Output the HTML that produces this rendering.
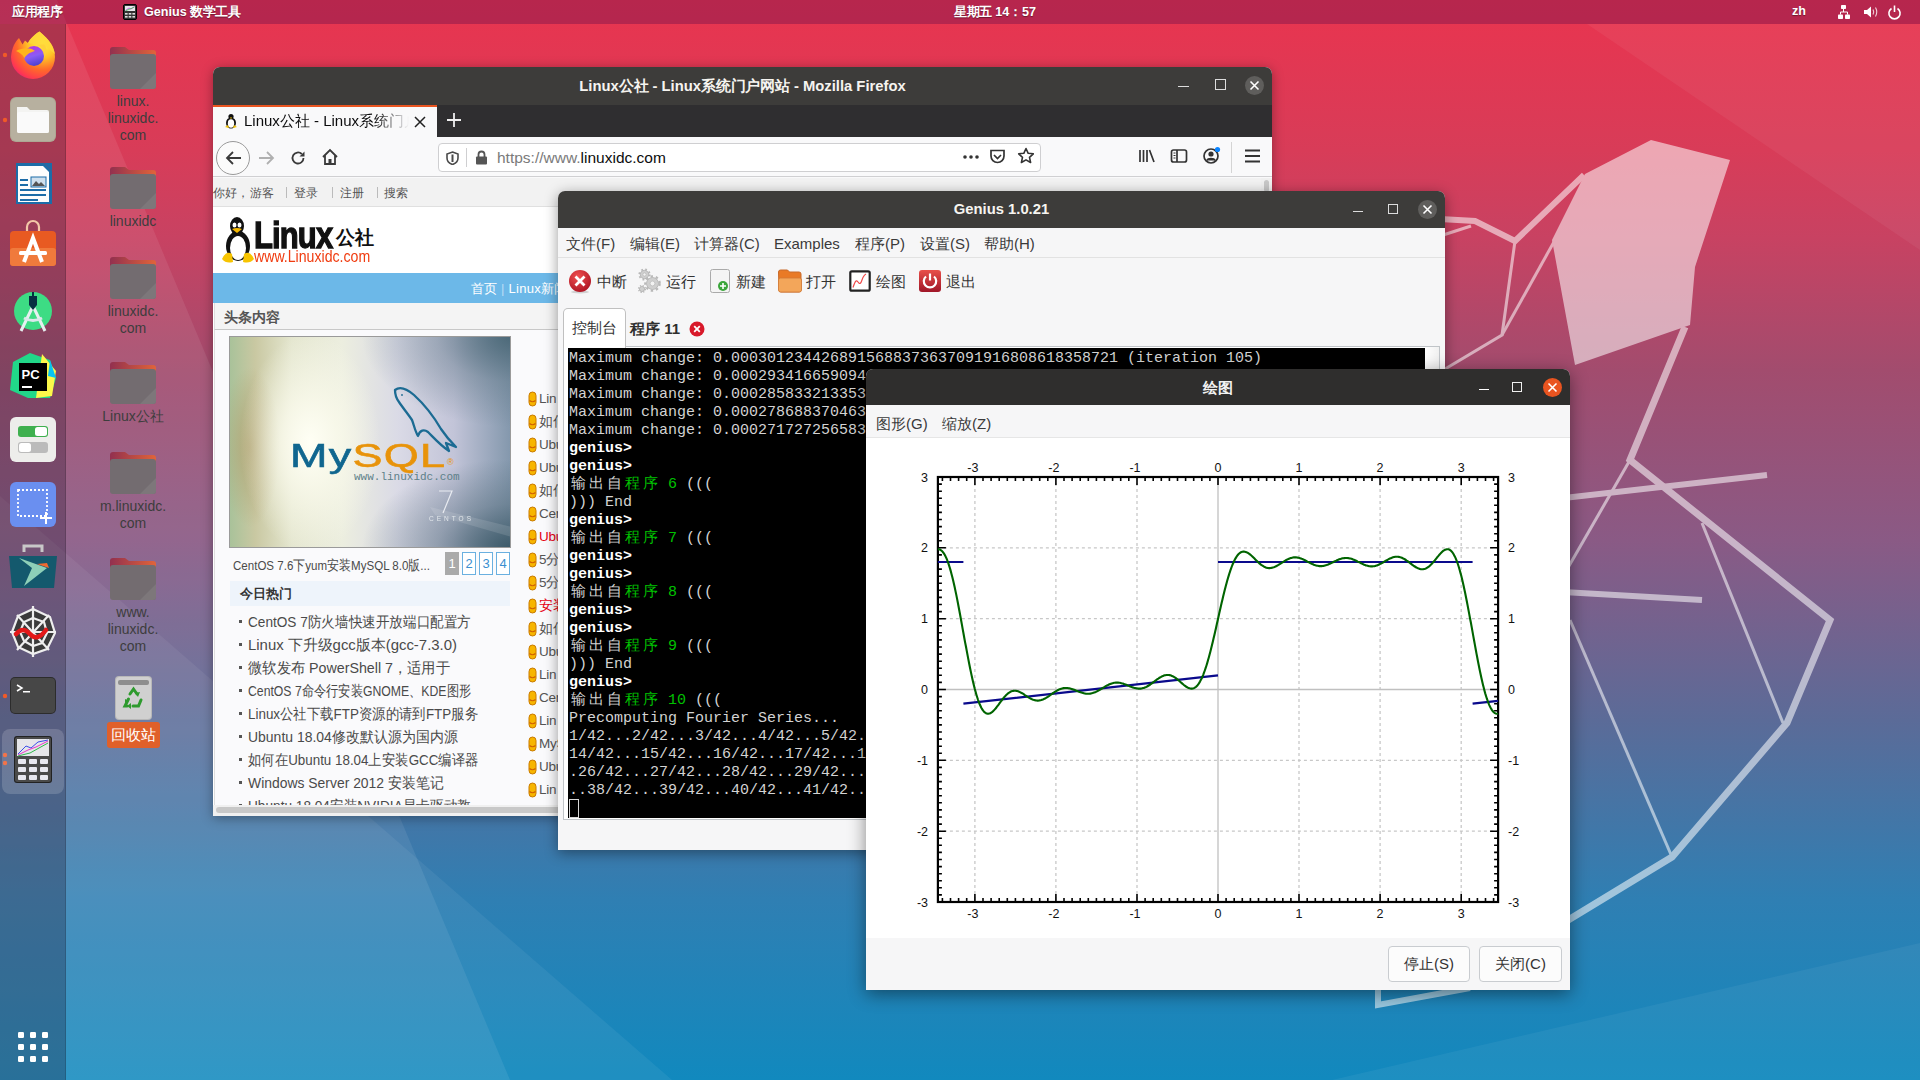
<!DOCTYPE html>
<html><head><meta charset="utf-8">
<style>
*{margin:0;padding:0;box-sizing:border-box}
html,body{width:1920px;height:1080px;overflow:hidden;font-family:"Liberation Sans",sans-serif}
body{position:relative;background:#8a5a85}
.a{position:absolute}
#wall{position:absolute;left:0;top:0}
#topbar{position:absolute;left:0;top:0;width:1920px;height:24px;background:rgba(95,15,75,0.36);color:#fff;font-size:12.6px;font-weight:bold}
#topbar span{position:absolute;top:4px;white-space:nowrap;text-shadow:0 1px 1px rgba(0,0,0,.4)}
#dock{position:absolute;left:0;top:24px;width:66px;height:1056px;background:rgba(25,12,35,0.28);border-right:1px solid rgba(0,0,0,.15)}
.dicon{position:absolute;left:9px;width:48px;height:48px}
.folder{position:absolute;left:109px;width:48px;height:42px}
.li{position:absolute;font-size:13.5px;color:#555;white-space:nowrap;line-height:18px;letter-spacing:-0.2px}
.pg{position:absolute;width:14px;height:23px;border:1px solid #6ab0e0;color:#3a8fd0;font-size:13px;text-align:center;line-height:21px;background:#fff}
.mi{position:absolute;top:44px;font-size:15px;color:#3a3a3a;white-space:nowrap}
.tb{position:absolute;top:82px;font-size:15px;color:#333;white-space:nowrap}
.cl{position:absolute;left:1px;height:18px;line-height:18px;font-family:"Liberation Mono",monospace;font-size:15px;color:#d3d3d3;white-space:pre}
.cj{display:inline-block;width:18px;text-align:center;font-size:15px}
.c{display:inline-block;width:1em;text-align:center;font-style:normal}
.dlabel{position:absolute;width:120px;left:73px;text-align:center;color:#3d3d3d;font-size:14px;line-height:17px}
</style></head><body>
<svg id="wall" width="1920" height="1080" viewBox="0 0 1920 1080">
<defs>
<linearGradient id="wg" x1="0" y1="0" x2="0" y2="1">
<stop offset="0" stop-color="#e9344f"/>
<stop offset="0.139" stop-color="#d83c58"/>
<stop offset="0.22" stop-color="#c84262"/>
<stop offset="0.343" stop-color="#a24c6e"/>
<stop offset="0.5" stop-color="#8a5a85"/>
<stop offset="0.667" stop-color="#5b6b98"/>
<stop offset="0.833" stop-color="#2f7fb3"/>
<stop offset="1" stop-color="#1189be"/>
</linearGradient>
</defs>
<rect width="1920" height="1080" fill="url(#wg)"/>
<polygon points="0,0 57,0 510,1080 0,1080" fill="#fff" opacity="0.08"/>
<polygon points="1587,24 1920,24 1920,250" fill="#fff" opacity="0.05"/>
<polygon points="1920,943 1920,1080 1332,1080" fill="#fff" opacity="0.05"/>
<polygon points="0,496 672,1080 0,1080" fill="#fff" opacity="0.06"/>
<g fill="none" stroke="#fff" stroke-linejoin="miter" opacity="0.55">
<polygon points="1651,140 1730,160 1695,267 1690,325 1575,365 1552,240 1585,174" fill="#fff" stroke="none" opacity="1.0"/>
<polyline points="1440,219 1475,221 1515,241 1584,175" stroke-width="6"/>
<polyline points="1440,236 1471,226" stroke-width="3"/>
<polyline points="1515,241 1502,335 1440,372" stroke-width="3"/>
<polyline points="1502,335 1555,240" stroke-width="3"/>
<polyline points="1685,327 1630,460 1830,620 1787,723 1672,857 1560,925" stroke-width="7"/>
<polyline points="1378,986 1378,1005 1470,988" stroke-width="6"/>
<polyline points="1440,512 1767,475" stroke-width="6"/>
<polyline points="1440,585 1702,600" stroke-width="6"/>
<polyline points="1630,460 1440,790" stroke-width="3"/>
<polyline points="1702,523 1783,723" stroke-width="3"/>
<polyline points="1570,620 1672,857" stroke-width="3"/>
</g>
</svg>

<div id="topbar">
<span style="left:12px"><i class="c">应</i><i class="c">用</i><i class="c">程</i><i class="c">序</i></span>
<svg class="a" style="left:123px;top:4px" width="14" height="16" viewBox="0 0 14 16"><rect x=".5" y=".5" width="13" height="15" rx="1.5" fill="#333" stroke="#000"/><rect x="2" y="2" width="10" height="5" fill="#e8e8ec"/><path d="M2.5 6.5L6 4L8 5L11.5 2.5" stroke="#c040e0" stroke-width=".8" fill="none"/><path d="M2.5 6.8L7 5L11.5 3" stroke="#30c040" stroke-width=".7" fill="none"/><g fill="#ddd"><rect x="2" y="9" width="2.6" height="1.6"/><rect x="5.7" y="9" width="2.6" height="1.6"/><rect x="9.4" y="9" width="2.6" height="1.6"/><rect x="2" y="12" width="2.6" height="1.6"/><rect x="5.7" y="12" width="2.6" height="1.6"/><rect x="9.4" y="12" width="2.6" height="1.6"/></g></svg>
<span style="left:144px">Genius <i class="c">数</i><i class="c">学</i><i class="c">工</i><i class="c">具</i></span>
<span style="left:954px"><i class="c">星</i><i class="c">期</i><i class="c">五</i> 14<i class="c">：</i>57</span>
<span style="left:1792px">zh</span>
<svg class="a" style="left:1836px;top:4px" width="70" height="16" viewBox="0 0 70 16">
<g fill="#fff"><rect x="5" y="1" width="5" height="4" rx=".8"/><rect x="2" y="10.5" width="5" height="4.5" rx=".8"/><rect x="9" y="10.5" width="5" height="4.5" rx=".8"/></g>
<path d="M7.5 5V8M4.5 10.5V8H11.5V10.5" fill="none" stroke="#fff" stroke-width="1"/>
<path d="M28 6H31L35 2.5V13.5L31 10H28z" fill="#fff"/><path d="M37 5.5Q38.5 8 37 10.5M39.5 3.5Q42 8 39.5 12.5" fill="none" stroke="#fff" stroke-width="1.1" opacity=".8"/>
<path d="M55.5 4.5A5.6 5.6 0 1 0 61.5 4.5" fill="none" stroke="#fff" stroke-width="1.6"/><path d="M58.5 1.5V8" stroke="#fff" stroke-width="1.6"/>
</svg>
</div>

<div id="dock"></div>

<svg class="a" style="left:0;top:0" width="66" height="1080" viewBox="0 0 66 1080">
 <defs>
  <radialGradient id="ffg" cx="0.5" cy="0.55" r="0.6"><stop offset="0" stop-color="#ffde3a"/><stop offset="0.5" stop-color="#ff9a1a"/><stop offset="1" stop-color="#e8286a"/></radialGradient>
  <linearGradient id="ffp" x1="0" y1="0" x2="1" y2="1"><stop offset="0" stop-color="#b833e1"/><stop offset="1" stop-color="#5a3fd0"/></linearGradient>
  <linearGradient id="tabg" x1="0" y1="0" x2="1" y2="0"><stop offset="0" stop-color="#9b2f55"/><stop offset="1" stop-color="#e8683a"/></linearGradient>
 </defs>
 <!-- running dots -->
 <circle cx="5" cy="55" r="2.2" fill="#f05a28"/>
 <circle cx="5" cy="120" r="2.2" fill="#f05a28"/>
 <circle cx="5" cy="696" r="2.2" fill="#f05a28"/>
 <circle cx="5" cy="755" r="2.2" fill="#f05a28"/>
 <circle cx="5" cy="763" r="2.2" fill="#f05a28"/>
 <!-- firefox -->
 <defs>
  <radialGradient id="ffr" cx="0.72" cy="0.22" r="0.95"><stop offset="0" stop-color="#fff44f"/><stop offset="0.35" stop-color="#ffc326"/><stop offset="0.62" stop-color="#ff6a2a"/><stop offset="0.85" stop-color="#ff3850"/><stop offset="1" stop-color="#e31587"/></radialGradient>
  <linearGradient id="ffq" x1="0.3" y1="0" x2="0.6" y2="1"><stop offset="0" stop-color="#b833e1"/><stop offset="0.5" stop-color="#8a5cf5"/><stop offset="1" stop-color="#4a3fd0"/></linearGradient>
 </defs>
 <path d="M11 57A22 22 0 0 0 55 57C55 47 50 40 39.5 31.5C35 34 30 39 28 43L25 40.5L22.5 44.5L19 38C15 42 12 47 11 57Z" fill="url(#ffr)"/>
 <path d="M28 43C30 39 35 34 39.5 31.5C48 39 53 45 55 54L46 47Z" fill="#ffd83a" opacity=".85"/>
 <circle cx="34" cy="56" r="10" fill="url(#ffq)"/>
 <path d="M16 51C22 48 30 47 35 51C30 52.5 27 54 24.5 58C22 54 19 52 16 51Z" fill="#ffb51e"/>
 <path d="M37 45C42 47 45 52 44 58C47 54 47.5 48 44 44.5Z" fill="#ffcf3a" opacity=".9"/>
 <!-- files -->
 <rect x="10" y="97" width="46" height="45" rx="6" fill="#aea693"/>
 <rect x="11" y="98" width="44" height="43" rx="5" fill="#b7b09f"/>
 <path d="M17 107h10l3 3h17a2 2 0 0 1 2 2v19a2 2 0 0 1-2 2H19a2 2 0 0 1-2-2z" fill="#f4f4f2"/>
 <rect x="17" y="112" width="32" height="21" rx="2" fill="#fafafa"/>
 <!-- writer -->
 <path d="M16 163H44L52 171V204H16z" fill="#1c6ca8"/>
 <path d="M18 166H43L49 172V202H18z" fill="#fdfdfd"/>
 <path d="M44 163L52 163L52 171z" fill="#1c6ca8"/>
 <rect x="20" y="179" width="8" height="2" fill="#1c6ca8"/><rect x="20" y="184" width="8" height="2" fill="#1c6ca8"/>
 <rect x="20" y="189" width="26" height="2" fill="#1c6ca8"/><rect x="20" y="194" width="26" height="2" fill="#1c6ca8"/><rect x="20" y="199" width="18" height="2" fill="#1c6ca8"/>
 <rect x="31" y="177" width="15" height="10" fill="#cfe0ee" stroke="#1c6ca8" stroke-width="1"/>
 <path d="M32 186L36 181L39 184L41 182L45 186z" fill="#555"/>
 <!-- software -->
 <path d="M27 232V227a6 6 0 0 1 12 0V232" fill="none" stroke="#f3c8a8" stroke-width="2.2"/>
 <rect x="10" y="231" width="46" height="35" rx="4" fill="#e85a22"/>
 <rect x="10" y="248" width="46" height="18" rx="3" fill="#f07a3c"/>
 <path d="M24 262L33 238L42 262" fill="none" stroke="#fff" stroke-width="4"/>
 <rect x="19" y="251" width="28" height="4" rx="1.5" fill="#fff"/>
 <!-- android studio -->
 <circle cx="33" cy="311" r="19" fill="#3ddc84"/>
 <path d="M21 331L33 306L45 331" fill="none" stroke="#e6f0f0" stroke-width="3"/>
 <path d="M24 318Q33 323 42 318" fill="none" stroke="#dce8ec" stroke-width="3"/>
 <path d="M29 296H37V305L33 310L29 305z" fill="#073042"/>
 <rect x="32" y="292" width="2" height="4" fill="#073042"/>
 <!-- pycharm -->
 <path d="M13 362L30 353L50 360L56 378L50 398L28 398L10 390z" fill="#21d789"/>
 <path d="M42 354L56 371L52 396L36 398z" fill="#fcf84a"/>
 <path d="M50 360L56 378L48 376z" fill="#07c3f2"/>
 <rect x="19" y="363" width="28" height="28" fill="#000"/>
 <text x="21.5" y="379" font-family="Liberation Sans" font-weight="bold" font-size="13" fill="#fff">PC</text>
 <rect x="22" y="386" width="10" height="2" fill="#fff"/>
 <!-- toggles -->
 <rect x="10" y="417" width="46" height="45" rx="6" fill="#ededeb"/>
 <rect x="18" y="426" width="30" height="11" rx="3" fill="#3fb04f"/>
 <rect x="35" y="427" width="12" height="9" rx="2.5" fill="#fff"/>
 <rect x="18" y="442" width="30" height="11" rx="3" fill="#bbbbbb"/>
 <rect x="19" y="443" width="12" height="9" rx="2.5" fill="#fff"/>
 <!-- screenshot -->
 <rect x="10" y="482" width="46" height="45" rx="6" fill="#6a8ff0"/>
 <rect x="18" y="490" width="29" height="26" fill="none" stroke="#fff" stroke-width="1.8" stroke-dasharray="2 2"/>
 <path d="M46 512V524M40 518H52" stroke="#fff" stroke-width="2"/>
 <!-- teal bag -->
 <path d="M24 552V546h18v6" fill="none" stroke="#c8c8c8" stroke-width="3"/>
 <path d="M9 556H57L54 588H12z" fill="#14596d"/>
 <path d="M19 558L47 568L24 586L32 568z" fill="#8ed0b8"/>
 <path d="M37 564L47 563L49 568z" fill="#f06a30"/>
 <!-- spider web -->
 <g stroke="#eee" stroke-width="2.2" fill="none">
 <polygon points="33,609 50,617 55,633 47,649 33,654 18,647 12,632 18,616" fill="#3a3a3a"/>
 <polygon points="33,618 44,622 47,633 42,643 33,646 24,641 20,632 24,622"/>
 <path d="M33,606V657M10,632H56M17,615L49,650M49,615L17,650"/>
 </g>
 <path d="M16 634Q23 626 30 634T46 630" fill="none" stroke="#e31818" stroke-width="4.5" stroke-linecap="round"/>
 <!-- terminal -->
 <rect x="10" y="677" width="46" height="37" rx="5" fill="#2c2c2c"/>
 <rect x="11" y="678" width="44" height="35" rx="4" fill="#474747"/>
 <path d="M17 685L22 688L17 691" fill="none" stroke="#fff" stroke-width="1.5"/>
 <rect x="23" y="691" width="7" height="1.5" fill="#fff"/>
 <!-- highlighted genius -->
 <rect x="2" y="729" width="62" height="65" rx="8" fill="#fff" opacity="0.16"/>
 <rect x="14" y="736" width="38" height="47" rx="3" fill="#222"/>
 <rect x="15" y="737" width="36" height="45" rx="2.5" fill="#4a4a4a"/>
 <rect x="17" y="739" width="32" height="17" fill="#e6e6ea"/>
 <path d="M18 754L26 746L31 748L38 742L48 740" fill="none" stroke="#3a4ee8" stroke-width="1"/>
 <path d="M18 755L28 750L36 747L48 741" fill="none" stroke="#e838c8" stroke-width="1"/>
 <path d="M18 756L30 753L48 743" fill="none" stroke="#2fb84a" stroke-width="1"/>
 <g fill="#e8e8f0">
  <rect x="18" y="759" width="8" height="5" rx="1"/><rect x="29" y="759" width="8" height="5" rx="1"/><rect x="40" y="759" width="8" height="5" rx="1"/>
  <rect x="18" y="767" width="8" height="5" rx="1"/><rect x="29" y="767" width="8" height="5" rx="1"/><rect x="40" y="767" width="8" height="5" rx="1"/>
  <rect x="18" y="775" width="8" height="5" rx="1"/><rect x="29" y="775" width="8" height="5" rx="1"/><rect x="40" y="775" width="8" height="5" rx="1"/>
 </g>
 <!-- grid -->
 <g fill="#fff">
  <rect x="18" y="1032" width="6" height="6" rx="1.2"/><rect x="30" y="1032" width="6" height="6" rx="1.2"/><rect x="42" y="1032" width="6" height="6" rx="1.2"/>
  <rect x="18" y="1044" width="6" height="6" rx="1.2"/><rect x="30" y="1044" width="6" height="6" rx="1.2"/><rect x="42" y="1044" width="6" height="6" rx="1.2"/>
  <rect x="18" y="1056" width="6" height="6" rx="1.2"/><rect x="30" y="1056" width="6" height="6" rx="1.2"/><rect x="42" y="1056" width="6" height="6" rx="1.2"/>
 </g>
</svg>
<svg class="a" style="left:100px;top:0" width="66" height="760" viewBox="100 0 66 760"><path d="M110 50a3 3 0 0 1 3-3h12l4 3h24a3 3 0 0 1 3 3v10H110z" fill="url(#tabg2)"/><rect x="110" y="54" width="46" height="35" rx="3" fill="#736c70"/><path d="M156 73L140 89H153a3 3 0 0 0 3-3z" fill="#7d777a"/><path d="M110 170a3 3 0 0 1 3-3h12l4 3h24a3 3 0 0 1 3 3v10H110z" fill="url(#tabg2)"/><rect x="110" y="174" width="46" height="35" rx="3" fill="#736c70"/><path d="M156 193L140 209H153a3 3 0 0 0 3-3z" fill="#7d777a"/><path d="M110 260a3 3 0 0 1 3-3h12l4 3h24a3 3 0 0 1 3 3v10H110z" fill="url(#tabg2)"/><rect x="110" y="264" width="46" height="35" rx="3" fill="#736c70"/><path d="M156 283L140 299H153a3 3 0 0 0 3-3z" fill="#7d777a"/><path d="M110 365a3 3 0 0 1 3-3h12l4 3h24a3 3 0 0 1 3 3v10H110z" fill="url(#tabg2)"/><rect x="110" y="369" width="46" height="35" rx="3" fill="#736c70"/><path d="M156 388L140 404H153a3 3 0 0 0 3-3z" fill="#7d777a"/><path d="M110 455a3 3 0 0 1 3-3h12l4 3h24a3 3 0 0 1 3 3v10H110z" fill="url(#tabg2)"/><rect x="110" y="459" width="46" height="35" rx="3" fill="#736c70"/><path d="M156 478L140 494H153a3 3 0 0 0 3-3z" fill="#7d777a"/><path d="M110 561a3 3 0 0 1 3-3h12l4 3h24a3 3 0 0 1 3 3v10H110z" fill="url(#tabg2)"/><rect x="110" y="565" width="46" height="35" rx="3" fill="#736c70"/><path d="M156 584L140 600H153a3 3 0 0 0 3-3z" fill="#7d777a"/><defs><linearGradient id="tabg2" x1="0" y1="0" x2="1" y2="0"><stop offset="0" stop-color="#92304f"/><stop offset="1" stop-color="#e0643a"/></linearGradient></defs><rect x="115" y="676" width="37" height="44" rx="4" fill="#b8b8b8"/><rect x="116" y="677" width="35" height="42" rx="3.5" fill="#d0d0d0"/><rect x="118" y="680" width="31" height="5" rx="2" fill="#8e8e8e"/><g fill="none" stroke="#2e9a2e" stroke-width="3" stroke-linecap="round"><path d="M130 694L133.5 689L137 694"/><path d="M141 700L138.5 706H133"/><path d="M127 706H125L128.5 699"/></g><g fill="#2e9a2e"><path d="M135 693l5-1-2 5z"/><path d="M131 703v6l-4-3z"/><path d="M129 701l-4-2 0 4z"/></g></svg><div class="dlabel" style="top:93px">linux.</div><div class="dlabel" style="top:110px">linuxidc.</div><div class="dlabel" style="top:127px">com</div><div class="dlabel" style="top:213px">linuxidc</div><div class="dlabel" style="top:303px">linuxidc.</div><div class="dlabel" style="top:320px">com</div><div class="dlabel" style="top:408px">Linux<i class="c">公</i><i class="c">社</i></div><div class="dlabel" style="top:498px">m.linuxidc.</div><div class="dlabel" style="top:515px">com</div><div class="dlabel" style="top:604px">www.</div><div class="dlabel" style="top:621px">linuxidc.</div><div class="dlabel" style="top:638px">com</div><div class="a" style="left:107px;top:722px;width:53px;height:26px;background:#e0602a;border-radius:3px;color:#fff;font-size:15px;text-align:center;line-height:26px"><i class="c">回</i><i class="c">收</i><i class="c">站</i></div>


<!-- FIREFOX -->
<div id="ff" class="a" style="left:213px;top:67px;width:1059px;height:749px;background:#f9f9fa;border-radius:7px 7px 0 0;overflow:hidden;box-shadow:0 2px 12px rgba(0,0,0,.35)">
 <div class="a" style="left:0;top:0;width:1059px;height:38px;background:#3d3c3a"></div>
 <div class="a" style="left:0;top:10px;width:1059px;text-align:center;color:#f6f4f0;font-weight:bold;font-size:14.8px;white-space:nowrap">Linux<i class="c">公</i><i class="c">社</i> - Linux<i class="c">系</i><i class="c">统</i><i class="c">门</i><i class="c">户</i><i class="c">网</i><i class="c">站</i> - Mozilla Firefox</div>
 <div class="a" style="left:965px;top:19px;width:11px;height:1px;background:#ddd"></div>
 <div class="a" style="left:1002px;top:12px;width:11px;height:11px;border:1.5px solid #ddd"></div>
 <div class="a" style="left:1032px;top:9px;width:19px;height:19px;border-radius:50%;background:#5f5e5c"></div>
 <svg class="a" style="left:1035px;top:12px" width="13" height="13"><path d="M2.5 2.5L10.5 10.5M10.5 2.5L2.5 10.5" stroke="#fff" stroke-width="1.6"/></svg>
 <!-- tab strip -->
 <div class="a" style="left:0;top:38px;width:1059px;height:32px;background:#2f2e30"></div>
 <div class="a" style="left:0;top:38px;width:224px;height:32px;background:#f9f9fa;border-top:2px solid #e95420"></div>
 <svg class="a" style="left:11px;top:46px" width="14" height="16" viewBox="0 0 14 16"><ellipse cx="7" cy="10" rx="5" ry="5.5" fill="#111"/><ellipse cx="7" cy="10.5" rx="3.2" ry="4.2" fill="#fff"/><circle cx="7" cy="3.5" r="2.6" fill="#111"/><path d="M1 14l3-2 1 3zM13 14l-3-2-1 3z" fill="#f5c400"/><path d="M5.8 4.5h2.4l-1.2 1.5z" fill="#f5c400"/></svg>
 <div class="a" style="left:31px;top:45px;width:165px;height:20px;overflow:hidden;white-space:nowrap;font-size:15px;color:#0c0c0d;-webkit-mask-image:linear-gradient(90deg,#000 80%,transparent)">Linux<i class="c">公</i><i class="c">社</i> - Linux<i class="c">系</i><i class="c">统</i><i class="c">门</i><i class="c">户</i><i class="c">网</i><i class="c">站</i></div>
 <svg class="a" style="left:200px;top:48px" width="14" height="14"><path d="M2 2L12 12M12 2L2 12" stroke="#222" stroke-width="1.5"/></svg>
 <svg class="a" style="left:233px;top:45px" width="16" height="16"><path d="M8 1V15M1 8H15" stroke="#f0f0f0" stroke-width="1.8"/></svg>
 <!-- navbar -->
 <div class="a" style="left:0;top:70px;width:1059px;height:40px;background:#f9f9fa;border-bottom:1px solid #d0d0d2"></div>
 <div class="a" style="left:3px;top:74px;width:34px;height:34px;border-radius:50%;border:1px solid #9a9a9a;background:#fbfbfb"></div>
 <svg class="a" style="left:12px;top:82px" width="18" height="18" viewBox="0 0 18 18"><path d="M16 9H2M8 3L2 9L8 15" fill="none" stroke="#3a3a3a" stroke-width="1.8"/></svg>
 <svg class="a" style="left:44px;top:82px" width="18" height="18" viewBox="0 0 18 18"><path d="M2 9H16M10 3L16 9L10 15" fill="none" stroke="#b0b0b0" stroke-width="1.8"/></svg>
 <svg class="a" style="left:76px;top:82px" width="18" height="18" viewBox="0 0 18 18"><path d="M14.5 9A5.5 5.5 0 1 1 12.8 5" fill="none" stroke="#3a3a3a" stroke-width="1.8"/><path d="M15.5 2.5V7.5H10.5z" fill="#3a3a3a"/></svg>
 <svg class="a" style="left:108px;top:81px" width="18" height="18" viewBox="0 0 18 18"><path d="M2 9L9 2L16 9M4 7.5V16H14V7.5" fill="none" stroke="#3a3a3a" stroke-width="1.8"/><rect x="7.5" y="11" width="3" height="5" fill="#3a3a3a"/></svg>
 <div class="a" style="left:225px;top:76px;width:603px;height:29px;border:1px solid #cfcfd1;border-radius:4px;background:#fff"></div>
 <svg class="a" style="left:233px;top:84px" width="13" height="14" viewBox="0 0 13 14"><path d="M6.5 1L12 3V7C12 10 9.5 12.5 6.5 13.5C3.5 12.5 1 10 1 7V3z" fill="none" stroke="#4a4a4a" stroke-width="1.6"/><path d="M6.5 3.5V11" stroke="#4a4a4a" stroke-width="2"/></svg>
 <div class="a" style="left:253px;top:81px;width:1px;height:19px;background:#cfcfd1"></div>
 <svg class="a" style="left:262px;top:83px" width="13" height="15" viewBox="0 0 13 15"><path d="M3.5 7V4.5a3 3 0 0 1 6 0V7" fill="none" stroke="#555" stroke-width="1.8"/><rect x="1" y="6.5" width="11" height="8" rx="1" fill="#555"/></svg>
 <div class="a" style="left:284px;top:82px;font-size:15.5px;color:#7a7a7a;white-space:nowrap">https://www.<span style="color:#0c0c0d">linuxidc.com</span></div>
 <svg class="a" style="left:748px;top:83px" width="20" height="14"><circle cx="4" cy="7" r="1.8" fill="#333"/><circle cx="10" cy="7" r="1.8" fill="#333"/><circle cx="16" cy="7" r="1.8" fill="#333"/></svg>
 <svg class="a" style="left:776px;top:81px" width="17" height="17" viewBox="0 0 17 17"><path d="M2 2.5H15V8A6.5 6.5 0 0 1 2 8z" fill="none" stroke="#333" stroke-width="1.7"/><path d="M5 7L8.5 10.5L12 7" fill="none" stroke="#333" stroke-width="1.7"/></svg>
 <svg class="a" style="left:804px;top:80px" width="18" height="18" viewBox="0 0 18 18"><path d="M9 1.5L11.2 6.3L16.3 6.8L12.5 10.3L13.6 15.5L9 12.9L4.4 15.5L5.5 10.3L1.7 6.8L6.8 6.3z" fill="none" stroke="#333" stroke-width="1.6" stroke-linejoin="round"/></svg>
 <svg class="a" style="left:925px;top:80px" width="18" height="18" viewBox="0 0 18 18"><path d="M2 3V15M5.5 3V15M9 3V15M11.5 3L16 15" fill="none" stroke="#333" stroke-width="1.7"/></svg>
 <svg class="a" style="left:957px;top:80px" width="18" height="18" viewBox="0 0 18 18"><rect x="1.5" y="3" width="15" height="12" rx="2" fill="none" stroke="#333" stroke-width="1.7"/><path d="M7 3V15" stroke="#333" stroke-width="1.7"/><path d="M3.5 6H5.5M3.5 8.5H5.5M3.5 11H5.5" stroke="#333" stroke-width="1"/></svg>
 <svg class="a" style="left:989px;top:79px" width="20" height="20" viewBox="0 0 20 20"><circle cx="9" cy="10" r="7" fill="none" stroke="#333" stroke-width="1.7"/><circle cx="9" cy="8" r="2.6" fill="#333"/><path d="M4.5 14.5C6 11.8 12 11.8 13.5 14.5" fill="#333" stroke="#333" stroke-width="1.5"/><circle cx="15.5" cy="3.5" r="2.6" fill="#0a84ff"/></svg>
 <div class="a" style="left:1018px;top:75px;width:1px;height:31px;background:#d4d4d4"></div>
 <svg class="a" style="left:1031px;top:81px" width="17" height="16"><path d="M1 2.5H16M1 8H16M1 13.5H16" stroke="#333" stroke-width="1.8"/></svg>
 <!-- content -->
 <div id="ffc" class="a" style="left:0;top:111px;width:1048px;height:638px;background:#fff;overflow:hidden">
 <div class="a" style="left:0;top:0;width:1048px;height:29px;background:#f2f2f2;border-bottom:1px solid #e0e0e0"></div>
 <div class="a" style="left:0;top:7px;font-size:12.2px;color:#555;white-space:nowrap"><i class="c">你</i><i class="c">好</i><i class="c">，</i><i class="c">游</i><i class="c">客</i></div>
 <div class="a" style="left:73px;top:9px;width:1px;height:11px;background:#bbb"></div>
 <div class="a" style="left:81px;top:7px;font-size:12.2px;color:#555;white-space:nowrap"><i class="c">登</i><i class="c">录</i></div>
 <div class="a" style="left:119px;top:9px;width:1px;height:11px;background:#bbb"></div>
 <div class="a" style="left:127px;top:7px;font-size:12.2px;color:#555;white-space:nowrap"><i class="c">注</i><i class="c">册</i></div>
 <div class="a" style="left:164px;top:9px;width:1px;height:11px;background:#bbb"></div>
 <div class="a" style="left:171px;top:7px;font-size:12.2px;color:#555;white-space:nowrap"><i class="c">搜</i><i class="c">索</i></div>
 <!-- logo -->
 <svg class="a" style="left:8px;top:38px" width="34" height="48" viewBox="0 0 34 48">
  <ellipse cx="17" cy="30" rx="12" ry="15" fill="#111"/>
  <ellipse cx="17" cy="32" rx="8" ry="12" fill="#fff"/>
  <ellipse cx="16" cy="10" rx="7" ry="9" fill="#111"/>
  <ellipse cx="13.5" cy="9" rx="2" ry="2.5" fill="#fff"/><ellipse cx="18.5" cy="9" rx="2" ry="2.5" fill="#fff"/>
  <path d="M11 13Q16 11 21 13L16 17z" fill="#f5b800"/>
  <path d="M1 43Q5 34 11 38L12 46Q5 48 1 43z" fill="#f7c400"/>
  <path d="M33 43Q29 34 23 38L22 46Q29 48 33 43z" fill="#f7c400"/>
 </svg>
 <div id="lgL" class="a" style="left:41px;top:40px;font-size:36px;font-weight:bold;color:#111;line-height:36px;letter-spacing:-1px;-webkit-text-stroke:1.3px #111;transform:scaleX(0.86);transform-origin:0 0">Linux</div>
 <div class="a" style="left:123px;top:48px;font-size:19px;font-weight:bold;color:#111;line-height:24px"><i class="c">公</i><i class="c">社</i></div>
 <div id="lgW" class="a" style="left:41px;top:70px;font-size:16.5px;color:#f03c10;line-height:17px;transform:scaleX(0.856);transform-origin:0 0;white-space:nowrap">www.Linuxidc.com</div>
 <!-- blue nav -->
 <div class="a" style="left:0;top:95px;width:1048px;height:30px;background:#6cb8e8"></div>
 <div class="a" style="left:258px;top:102px;font-size:13px;color:#fff;white-space:nowrap;letter-spacing:0.3px"><i class="c">首</i><i class="c">页</i> <span style="color:#b8dcf4">|</span> Linux<i class="c">新</i><i class="c">闻</i></div>
 <!-- headline bar -->
 <div class="a" style="left:1px;top:125px;width:1046px;height:27px;background:#f4f4f4;border-bottom:1px solid #c8c8c8;border-left:1px solid #ddd"></div>
 <div class="a" style="left:11px;top:131px;font-size:14px;color:#555;font-weight:bold;white-space:nowrap"><i class="c">头</i><i class="c">条</i><i class="c">内</i><i class="c">容</i></div>
 <div class="a" style="left:1px;top:152px;width:1046px;height:486px;background:#fafafc;border-left:1px solid #ddd"></div>
 <!-- image -->
 <div class="a" style="left:16px;top:158px;width:282px;height:212px;border:1px solid #9a9a9a;overflow:hidden;background:
radial-gradient(ellipse 70px 110px at 80px 106px,rgba(255,255,245,1) 0%,rgba(250,250,236,.8) 40%,rgba(250,250,236,0) 100%),
radial-gradient(ellipse 150px 90px at 282px 0px,rgba(70,100,115,.9) 0%,rgba(90,115,130,.4) 50%,rgba(120,140,150,0) 100%),
radial-gradient(ellipse 150px 90px at 282px 212px,rgba(55,85,100,.95) 0%,rgba(80,105,120,.45) 50%,rgba(120,140,150,0) 100%),
radial-gradient(ellipse 30px 80px at 20px 110px,rgba(175,160,110,.8) 0%,rgba(190,180,130,0) 100%),
linear-gradient(90deg,#a9c29a 0%,#c9c8a2 9%,#e4e6cf 22%,#eceedf 40%,#dadae6 60%,#c2c4d8 80%,#8498ad 100%)">
  <svg class="a" style="left:0;top:0" width="282" height="212" viewBox="0 0 282 212">
   <path d="M165 53C170 49 177 52 184 58C195 68 204 80 211 92C215 98 220 104 226 110L216 106L219 114C210 108 204 101 198 95C194 92 190 93 188 99C185 94 184 88 182 83C178 77 173 71 169 65C166 61 165 57 165 53Z" fill="none" stroke="#1c6b93" stroke-width="2.3" stroke-linejoin="round"/>
   <circle cx="172" cy="58" r="0.9" fill="#1c6b93"/>
   <path d="M209 154H222L213 176" fill="none" stroke="#f0f2f6" stroke-width="1.2" opacity=".9"/>
   <path d="M200 170L282 190L282 200L205 178z" fill="#fff" opacity=".12"/>
  </svg>
  <div id="lgM" class="a" style="left:60px;top:102px;font-size:33px;line-height:33px;color:#10668f;letter-spacing:1px;white-space:nowrap;transform:scaleX(1.36);transform-origin:0 0;-webkit-text-stroke:0.6px #10668f">My<span style="color:#e8930a;-webkit-text-stroke:0.6px #e8930a">SQL</span></div><div class="a" style="left:217px;top:120px;font-size:9px;color:#e8930a">®</div>
  <div class="a" style="left:124px;top:134px;font-family:'Liberation Mono',monospace;font-size:11px;color:#5d7f88;white-space:nowrap">www.linuxidc.com</div>
  <div class="a" style="left:199px;top:178px;font-size:6.5px;color:#eef2f4;letter-spacing:3px;opacity:.85">CENTOS</div>
 </div>
 
 <div class="a" style="left:232px;top:374px;width:14px;height:23px;background:#aaa;color:#fff;font-size:13px;text-align:center;line-height:23px">1</div>
 <div class="a pg" style="left:249px;top:374px">2</div>
 <div class="a pg" style="left:266px;top:374px">3</div>
 <div class="a pg" style="left:283px;top:374px">4</div>
 <!-- hot -->
 <div class="a" style="left:17px;top:403px;width:280px;height:25px;background:#eef4fb"></div>
 <div class="a" style="left:27px;top:407px;font-size:13px;font-weight:bold;color:#333;white-space:nowrap"><i class="c">今</i><i class="c">日</i><i class="c">热</i><i class="c">门</i></div>
 <div class="a" style="left:26px;top:442px;width:3px;height:3px;background:#555"></div><div class="a" style="left:26px;top:465px;width:3px;height:3px;background:#555"></div><div class="a" style="left:26px;top:488px;width:3px;height:3px;background:#555"></div><div class="a" style="left:26px;top:511px;width:3px;height:3px;background:#555"></div><div class="a" style="left:26px;top:534px;width:3px;height:3px;background:#555"></div><div class="a" style="left:26px;top:557px;width:3px;height:3px;background:#555"></div><div class="a" style="left:26px;top:580px;width:3px;height:3px;background:#555"></div><div class="a" style="left:26px;top:603px;width:3px;height:3px;background:#555"></div><div class="a" style="left:26px;top:626px;width:3px;height:3px;background:#555"></div>
 <svg class="a" style="left:315px;top:213px" width="9" height="16" viewBox="0 0 9 16"><rect x="1" y="1" width="7" height="14" rx="3.5" fill="#f7b500" stroke="#c97a00" stroke-width="1"/><path d="M1.5 9.5Q4.5 12 7.5 9.5" stroke="#d06000" stroke-width="1.2" fill="none"/></svg><div class="a li" style="left:326px;top:212px;color:#555">Lin</div><svg class="a" style="left:315px;top:236px" width="9" height="16" viewBox="0 0 9 16"><rect x="1" y="1" width="7" height="14" rx="3.5" fill="#f7b500" stroke="#c97a00" stroke-width="1"/><path d="M1.5 9.5Q4.5 12 7.5 9.5" stroke="#d06000" stroke-width="1.2" fill="none"/></svg><div class="a li" style="left:326px;top:235px;color:#555"><i class="c">如</i><i class="c">何</i></div><svg class="a" style="left:315px;top:259px" width="9" height="16" viewBox="0 0 9 16"><rect x="1" y="1" width="7" height="14" rx="3.5" fill="#f7b500" stroke="#c97a00" stroke-width="1"/><path d="M1.5 9.5Q4.5 12 7.5 9.5" stroke="#d06000" stroke-width="1.2" fill="none"/></svg><div class="a li" style="left:326px;top:258px;color:#555">Ubu</div><svg class="a" style="left:315px;top:282px" width="9" height="16" viewBox="0 0 9 16"><rect x="1" y="1" width="7" height="14" rx="3.5" fill="#f7b500" stroke="#c97a00" stroke-width="1"/><path d="M1.5 9.5Q4.5 12 7.5 9.5" stroke="#d06000" stroke-width="1.2" fill="none"/></svg><div class="a li" style="left:326px;top:281px;color:#555">Ubu</div><svg class="a" style="left:315px;top:305px" width="9" height="16" viewBox="0 0 9 16"><rect x="1" y="1" width="7" height="14" rx="3.5" fill="#f7b500" stroke="#c97a00" stroke-width="1"/><path d="M1.5 9.5Q4.5 12 7.5 9.5" stroke="#d06000" stroke-width="1.2" fill="none"/></svg><div class="a li" style="left:326px;top:304px;color:#555"><i class="c">如</i><i class="c">何</i></div><svg class="a" style="left:315px;top:328px" width="9" height="16" viewBox="0 0 9 16"><rect x="1" y="1" width="7" height="14" rx="3.5" fill="#f7b500" stroke="#c97a00" stroke-width="1"/><path d="M1.5 9.5Q4.5 12 7.5 9.5" stroke="#d06000" stroke-width="1.2" fill="none"/></svg><div class="a li" style="left:326px;top:327px;color:#555">Cen</div><svg class="a" style="left:315px;top:351px" width="9" height="16" viewBox="0 0 9 16"><rect x="1" y="1" width="7" height="14" rx="3.5" fill="#f7b500" stroke="#c97a00" stroke-width="1"/><path d="M1.5 9.5Q4.5 12 7.5 9.5" stroke="#d06000" stroke-width="1.2" fill="none"/></svg><div class="a li" style="left:326px;top:350px;color:#e60012">Ubu</div><svg class="a" style="left:315px;top:374px" width="9" height="16" viewBox="0 0 9 16"><rect x="1" y="1" width="7" height="14" rx="3.5" fill="#f7b500" stroke="#c97a00" stroke-width="1"/><path d="M1.5 9.5Q4.5 12 7.5 9.5" stroke="#d06000" stroke-width="1.2" fill="none"/></svg><div class="a li" style="left:326px;top:373px;color:#555">5<i class="c">分</i></div><svg class="a" style="left:315px;top:397px" width="9" height="16" viewBox="0 0 9 16"><rect x="1" y="1" width="7" height="14" rx="3.5" fill="#f7b500" stroke="#c97a00" stroke-width="1"/><path d="M1.5 9.5Q4.5 12 7.5 9.5" stroke="#d06000" stroke-width="1.2" fill="none"/></svg><div class="a li" style="left:326px;top:396px;color:#555">5<i class="c">分</i></div><svg class="a" style="left:315px;top:420px" width="9" height="16" viewBox="0 0 9 16"><rect x="1" y="1" width="7" height="14" rx="3.5" fill="#f7b500" stroke="#c97a00" stroke-width="1"/><path d="M1.5 9.5Q4.5 12 7.5 9.5" stroke="#d06000" stroke-width="1.2" fill="none"/></svg><div class="a li" style="left:326px;top:419px;color:#e60012"><i class="c">安</i><i class="c">装</i></div><svg class="a" style="left:315px;top:443px" width="9" height="16" viewBox="0 0 9 16"><rect x="1" y="1" width="7" height="14" rx="3.5" fill="#f7b500" stroke="#c97a00" stroke-width="1"/><path d="M1.5 9.5Q4.5 12 7.5 9.5" stroke="#d06000" stroke-width="1.2" fill="none"/></svg><div class="a li" style="left:326px;top:442px;color:#555"><i class="c">如</i><i class="c">何</i></div><svg class="a" style="left:315px;top:466px" width="9" height="16" viewBox="0 0 9 16"><rect x="1" y="1" width="7" height="14" rx="3.5" fill="#f7b500" stroke="#c97a00" stroke-width="1"/><path d="M1.5 9.5Q4.5 12 7.5 9.5" stroke="#d06000" stroke-width="1.2" fill="none"/></svg><div class="a li" style="left:326px;top:465px;color:#555">Ubu</div><svg class="a" style="left:315px;top:489px" width="9" height="16" viewBox="0 0 9 16"><rect x="1" y="1" width="7" height="14" rx="3.5" fill="#f7b500" stroke="#c97a00" stroke-width="1"/><path d="M1.5 9.5Q4.5 12 7.5 9.5" stroke="#d06000" stroke-width="1.2" fill="none"/></svg><div class="a li" style="left:326px;top:488px;color:#555">Lin</div><svg class="a" style="left:315px;top:512px" width="9" height="16" viewBox="0 0 9 16"><rect x="1" y="1" width="7" height="14" rx="3.5" fill="#f7b500" stroke="#c97a00" stroke-width="1"/><path d="M1.5 9.5Q4.5 12 7.5 9.5" stroke="#d06000" stroke-width="1.2" fill="none"/></svg><div class="a li" style="left:326px;top:511px;color:#555">Cen</div><svg class="a" style="left:315px;top:535px" width="9" height="16" viewBox="0 0 9 16"><rect x="1" y="1" width="7" height="14" rx="3.5" fill="#f7b500" stroke="#c97a00" stroke-width="1"/><path d="M1.5 9.5Q4.5 12 7.5 9.5" stroke="#d06000" stroke-width="1.2" fill="none"/></svg><div class="a li" style="left:326px;top:534px;color:#555">Lin</div><svg class="a" style="left:315px;top:558px" width="9" height="16" viewBox="0 0 9 16"><rect x="1" y="1" width="7" height="14" rx="3.5" fill="#f7b500" stroke="#c97a00" stroke-width="1"/><path d="M1.5 9.5Q4.5 12 7.5 9.5" stroke="#d06000" stroke-width="1.2" fill="none"/></svg><div class="a li" style="left:326px;top:557px;color:#555">MyS</div><svg class="a" style="left:315px;top:581px" width="9" height="16" viewBox="0 0 9 16"><rect x="1" y="1" width="7" height="14" rx="3.5" fill="#f7b500" stroke="#c97a00" stroke-width="1"/><path d="M1.5 9.5Q4.5 12 7.5 9.5" stroke="#d06000" stroke-width="1.2" fill="none"/></svg><div class="a li" style="left:326px;top:580px;color:#555">Ubu</div><svg class="a" style="left:315px;top:604px" width="9" height="16" viewBox="0 0 9 16"><rect x="1" y="1" width="7" height="14" rx="3.5" fill="#f7b500" stroke="#c97a00" stroke-width="1"/><path d="M1.5 9.5Q4.5 12 7.5 9.5" stroke="#d06000" stroke-width="1.2" fill="none"/></svg><div class="a li" style="left:326px;top:603px;color:#555">Lin</div>
 <svg class="a" style="left:0;top:0" width="1048" height="638" viewBox="213 178 1048 638"><g font-family="Liberation Sans" font-size="15" fill="#4a4a4a"><text x="248" y="627" textLength="223" lengthAdjust="spacingAndGlyphs">CentOS 7防火墙快速开放端口配置方</text><text x="248" y="650" textLength="209" lengthAdjust="spacingAndGlyphs">Linux 下升级gcc版本(gcc-7.3.0)</text><text x="248" y="673" textLength="202" lengthAdjust="spacingAndGlyphs">微软发布 PowerShell 7，适用于</text><text x="248" y="696" textLength="223" lengthAdjust="spacingAndGlyphs">CentOS 7命令行安装GNOME、KDE图形</text><text x="248" y="719" textLength="230" lengthAdjust="spacingAndGlyphs">Linux公社下载FTP资源的请到FTP服务</text><text x="248" y="742" textLength="209.5" lengthAdjust="spacingAndGlyphs">Ubuntu 18.04修改默认源为国内源</text><text x="248" y="765" textLength="230.5" lengthAdjust="spacingAndGlyphs">如何在Ubuntu 18.04上安装GCC编译器</text><text x="248" y="788" textLength="195.6" lengthAdjust="spacingAndGlyphs">Windows Server 2012 安装笔记</text><text x="248" y="811" textLength="223" lengthAdjust="spacingAndGlyphs">Ubuntu 18.04安装NVIDIA显卡驱动教</text><text x="233" y="570" textLength="197" lengthAdjust="spacingAndGlyphs" font-size="13.5">CentOS 7.6下yum安装MySQL 8.0版...</text></g></svg>
 <!-- hscroll -->
 <div class="a" style="left:0;top:627px;width:1048px;height:11px;background:#f0f0f0"></div>
 <div class="a" style="left:3px;top:629px;width:1040px;height:6px;border-radius:3px;background:#c8c8c8"></div>

 </div>
 <div class="a" style="left:1048px;top:111px;width:11px;height:638px;background:#f0f0f0"></div>
 <div class="a" style="left:1051px;top:113px;width:5px;height:12px;border-radius:3px;background:#c8c8c8"></div>
</div>


<!-- GENIUS -->
<div id="gen" class="a" style="left:558px;top:191px;width:887px;height:659px;background:#f6f6f7;border-radius:7px 7px 0 0;overflow:hidden;box-shadow:0 3px 14px rgba(0,0,0,.4)">
 <div class="a" style="left:0;top:0;width:887px;height:37px;background:#3d3c3a"></div>
 <div class="a" style="left:0;top:10px;width:887px;text-align:center;color:#f6f4f0;font-weight:bold;font-size:14.8px">Genius 1.0.21</div>
 <div class="a" style="left:795px;top:20px;width:10px;height:1px;background:#ddd"></div>
 <div class="a" style="left:830px;top:13px;width:10px;height:10px;border:1.5px solid #ddd"></div>
 <div class="a" style="left:860px;top:9px;width:19px;height:19px;border-radius:50%;background:#5f5e5c"></div>
 <svg class="a" style="left:863px;top:12px" width="13" height="13"><path d="M2.5 2.5L10.5 10.5M10.5 2.5L2.5 10.5" stroke="#fff" stroke-width="1.6"/></svg>
 <!-- menu -->
 <div class="a" style="left:0;top:37px;width:887px;height:30px;border-bottom:1px solid #e2e2e2"></div>
 <div class="a mi" style="left:8px"><i class="c">文</i><i class="c">件</i>(F)</div>
 <div class="a mi" style="left:72px"><i class="c">编</i><i class="c">辑</i>(E)</div>
 <div class="a mi" style="left:136px"><i class="c">计</i><i class="c">算</i><i class="c">器</i>(C)</div>
 <div class="a mi" style="left:216px">Examples</div>
 <div class="a mi" style="left:297px"><i class="c">程</i><i class="c">序</i>(P)</div>
 <div class="a mi" style="left:362px"><i class="c">设</i><i class="c">置</i>(S)</div>
 <div class="a mi" style="left:426px"><i class="c">帮</i><i class="c">助</i>(H)</div>
 <!-- toolbar -->
 <svg class="a" style="left:10px;top:78px" width="24" height="25" viewBox="0 0 24 25"><defs><radialGradient id="rg1" cx="0.4" cy="0.3" r="0.8"><stop offset="0" stop-color="#f05050"/><stop offset="1" stop-color="#a80f1f"/></radialGradient></defs><ellipse cx="12" cy="23" rx="9" ry="1.5" fill="#000" opacity=".15"/><circle cx="12" cy="12" r="11" fill="url(#rg1)"/><path d="M7.5 7.5L16.5 16.5M16.5 7.5L7.5 16.5" stroke="#fff" stroke-width="2.8"/></svg>
 <div class="a tb" style="left:39px"><i class="c">中</i><i class="c">断</i></div>
 <svg class="a" style="left:79px;top:77px" width="26" height="26" viewBox="0 0 26 26">
<g fill="#cfcfcf" stroke="#a9a9a9" stroke-width=".7"><circle cx="7.5" cy="6.5" r="4.2"/><circle cx="15.5" cy="15.5" r="6"/><circle cx="5" cy="21" r="2.6"/></g>
<circle cx="7.5" cy="6.5" r="5.2" fill="none" stroke="#b8b8b8" stroke-width="1.8" stroke-dasharray="1.8 2.3"/>
<circle cx="15.5" cy="15.5" r="7.2" fill="none" stroke="#b8b8b8" stroke-width="2.2" stroke-dasharray="2.4 2.9"/>
<circle cx="5" cy="21" r="3.4" fill="none" stroke="#b8b8b8" stroke-width="1.4" stroke-dasharray="1.3 1.4"/>
<circle cx="7.5" cy="6.5" r="1.6" fill="#f2f2f2" stroke="#aaa" stroke-width=".5"/><circle cx="15.5" cy="15.5" r="2.4" fill="#f2f2f2" stroke="#aaa" stroke-width=".5"/></svg>
 <div class="a tb" style="left:108px"><i class="c">运</i><i class="c">行</i></div>
 <svg class="a" style="left:151px;top:77px" width="22" height="26" viewBox="0 0 22 26"><rect x="1.5" y="1.5" width="19" height="23" rx="2" fill="#f4f4f4" stroke="#aaa" stroke-width="1"/><circle cx="14" cy="18" r="5" fill="#3aa53a"/><path d="M14 15V21M11 18H17" stroke="#fff" stroke-width="1.6"/></svg>
 <div class="a tb" style="left:178px"><i class="c">新</i><i class="c">建</i></div>
 <svg class="a" style="left:219px;top:78px" width="26" height="24" viewBox="0 0 26 24"><path d="M1.5 3a2 2 0 0 1 2-2h7l2 2h9.5a2 2 0 0 1 2 2v16a2 2 0 0 1-2 2h-18a2 2 0 0 1-2-2z" fill="#e97a26" stroke="#c86a2a" stroke-width="1"/><rect x="1.5" y="9" width="23" height="14" rx="2" fill="#f3a65a" stroke="#d07a35" stroke-width=".8"/></svg>
 <div class="a tb" style="left:248px"><i class="c">打</i><i class="c">开</i></div>
 <svg class="a" style="left:291px;top:79px" width="22" height="22" viewBox="0 0 22 22"><rect x="1.3" y="1.3" width="19.4" height="19.4" rx="1.5" fill="#fff" stroke="#222" stroke-width="2.2"/><path d="M4 17.5C6 12 7 9 9 12S12 13 13 10S15 5 17 4" fill="none" stroke="#f04a4a" stroke-width="1.2"/></svg>
 <div class="a tb" style="left:318px"><i class="c">绘</i><i class="c">图</i></div>
 <svg class="a" style="left:360px;top:78px" width="24" height="24" viewBox="0 0 24 24"><defs><linearGradient id="qg" x1="0" y1="0" x2="0" y2="1"><stop offset="0" stop-color="#e8504a"/><stop offset="1" stop-color="#a01628"/></linearGradient></defs><rect x="1" y="1" width="22" height="22" rx="3" fill="url(#qg)"/><path d="M8 7.5A6.2 6.2 0 1 0 16 7.5" fill="none" stroke="#fff" stroke-width="2.2"/><path d="M12 4.5V11.5" stroke="#fff" stroke-width="2.2"/></svg>
 <div class="a tb" style="left:388px"><i class="c">退</i><i class="c">出</i></div>
 <!-- notebook -->
 <div class="a" style="left:5px;top:155px;width:877px;height:474px;border:1px solid #c0c4c8;background:#fff"></div>
 <div class="a" style="left:5px;top:117px;width:63px;height:40px;border:1px solid #c0c0c0;border-bottom:none;border-radius:5px 5px 0 0;background:#fff"></div>
 <div class="a" style="left:14px;top:128px;font-size:15px;color:#333;white-space:nowrap"><i class="c">控</i><i class="c">制</i><i class="c">台</i></div>
 <div class="a" style="left:72px;top:129px;font-size:15px;color:#2e2e2e;font-weight:bold;white-space:nowrap"><i class="c">程</i><i class="c">序</i> 11</div>
 <svg class="a" style="left:131px;top:130px" width="16" height="16"><circle cx="8" cy="8" r="7.5" fill="#d8192a"/><path d="M5.2 5.2L10.8 10.8M10.8 5.2L5.2 10.8" stroke="#fff" stroke-width="1.8"/></svg>
 <div class="a" style="left:10px;top:157px;width:857px;height:470px;background:#000;overflow:hidden">
  <div class="cl" style="top:2px">Maximum change: 0.0003012344268915688373637091916808618358721 (iteration 105)</div><div class="cl" style="top:20px">Maximum change: 0.00029341665909412345678901234567890123456 (iteration 106)</div><div class="cl" style="top:38px">Maximum change: 0.00028583321335312345678901234567890123456 (iteration 107)</div><div class="cl" style="top:56px">Maximum change: 0.00027868837046312345678901234567890123456 (iteration 108)</div><div class="cl" style="top:74px">Maximum change: 0.00027172725658312345678901234567890123456 (iteration 109)</div><div class="cl" style="top:92px"><b style="color:#fff">genius&gt;</b></div><div class="cl" style="top:110px"><b style="color:#fff">genius&gt;</b></div><div class="cl" style="top:128px"><span class="cj" style="color:#d3d3d3"><i class="c">输</i></span><span class="cj" style="color:#d3d3d3"><i class="c">出</i></span><span class="cj" style="color:#d3d3d3"><i class="c">自</i></span><span class="cj" style="color:#00c000"><i class="c">程</i></span><span class="cj" style="color:#00c000"><i class="c">序</i></span><span style="color:#00c000"> 6</span> (((</div><div class="cl" style="top:146px">))) End</div><div class="cl" style="top:164px"><b style="color:#fff">genius&gt;</b></div><div class="cl" style="top:182px"><span class="cj" style="color:#d3d3d3"><i class="c">输</i></span><span class="cj" style="color:#d3d3d3"><i class="c">出</i></span><span class="cj" style="color:#d3d3d3"><i class="c">自</i></span><span class="cj" style="color:#00c000"><i class="c">程</i></span><span class="cj" style="color:#00c000"><i class="c">序</i></span><span style="color:#00c000"> 7</span> (((</div><div class="cl" style="top:200px"><b style="color:#fff">genius&gt;</b></div><div class="cl" style="top:218px"><b style="color:#fff">genius&gt;</b></div><div class="cl" style="top:236px"><span class="cj" style="color:#d3d3d3"><i class="c">输</i></span><span class="cj" style="color:#d3d3d3"><i class="c">出</i></span><span class="cj" style="color:#d3d3d3"><i class="c">自</i></span><span class="cj" style="color:#00c000"><i class="c">程</i></span><span class="cj" style="color:#00c000"><i class="c">序</i></span><span style="color:#00c000"> 8</span> (((</div><div class="cl" style="top:254px"><b style="color:#fff">genius&gt;</b></div><div class="cl" style="top:272px"><b style="color:#fff">genius&gt;</b></div><div class="cl" style="top:290px"><span class="cj" style="color:#d3d3d3"><i class="c">输</i></span><span class="cj" style="color:#d3d3d3"><i class="c">出</i></span><span class="cj" style="color:#d3d3d3"><i class="c">自</i></span><span class="cj" style="color:#00c000"><i class="c">程</i></span><span class="cj" style="color:#00c000"><i class="c">序</i></span><span style="color:#00c000"> 9</span> (((</div><div class="cl" style="top:308px">))) End</div><div class="cl" style="top:326px"><b style="color:#fff">genius&gt;</b></div><div class="cl" style="top:344px"><span class="cj" style="color:#d3d3d3"><i class="c">输</i></span><span class="cj" style="color:#d3d3d3"><i class="c">出</i></span><span class="cj" style="color:#d3d3d3"><i class="c">自</i></span><span class="cj" style="color:#00c000"><i class="c">程</i></span><span class="cj" style="color:#00c000"><i class="c">序</i></span><span style="color:#00c000"> 10</span> (((</div><div class="cl" style="top:362px">Precomputing Fourier Series...</div><div class="cl" style="top:380px">1/42...2/42...3/42...4/42...5/42...6/42...7/42...8/42...9/42...10/42...11/42...12/42...13/42...</div><div class="cl" style="top:398px">14/42...15/42...16/42...17/42...18/42...19/42...20/42...21/42...22/42...23/42...24/42...25/42..</div><div class="cl" style="top:416px">.26/42...27/42...28/42...29/42...30/42...31/42...32/42...33/42...34/42...35/42...36/42...37/42.</div><div class="cl" style="top:434px">..38/42...39/42...40/42...41/42...42/42...</div>
  <div class="a" style="left:1px;top:451px;width:10px;height:19px;border:1px solid #d8d8d8;background:#000"></div>
 </div>
 <div class="a" style="left:867px;top:156px;width:14px;height:472px;background:linear-gradient(90deg,#fff,#f0f0f0)"></div>
</div>


<!-- PLOT -->
<div id="plot" class="a" style="left:866px;top:369px;width:704px;height:621px;background:#f6f6f7;border-radius:7px 7px 0 0;overflow:hidden;box-shadow:0 4px 18px rgba(0,0,0,.45)">
 <div class="a" style="left:0;top:0;width:704px;height:36px;background:#2f2e2d"></div>
 <div class="a" style="left:0;top:10px;width:704px;text-align:center;color:#f2f2f2;font-weight:bold;font-size:15px"><i class="c">绘</i><i class="c">图</i></div>
 <div class="a" style="left:613px;top:20px;width:10px;height:1px;background:#fff"></div>
 <div class="a" style="left:646px;top:13px;width:10px;height:10px;border:1.5px solid #f0f0f0"></div>
 <div class="a" style="left:677px;top:9px;width:19px;height:19px;border-radius:50%;background:#e95420"></div>
 <svg class="a" style="left:680px;top:12px" width="13" height="13"><path d="M2.5 2.5L10.5 10.5M10.5 2.5L2.5 10.5" stroke="#fff" stroke-width="1.6"/></svg>
 <div class="a" style="left:0;top:36px;width:704px;height:33px;border-bottom:1px solid #e6e6e6"></div>
 <div class="a" style="left:10px;top:46px;font-size:15px;color:#3a3a3a;white-space:nowrap"><i class="c">图</i><i class="c">形</i>(G)</div>
 <div class="a" style="left:76px;top:46px;font-size:15px;color:#3a3a3a;white-space:nowrap"><i class="c">缩</i><i class="c">放</i>(Z)</div>
 <svg class="a" style="left:0;top:69px" width="704" height="500" viewBox="866 438 704 500">
 <rect x="866" y="438" width="704" height="500" fill="#fff"/>
 <path d="M974.9 477.0V902.0M1055.9 477.0V902.0M1137.0 477.0V902.0M1299.0 477.0V902.0M1380.1 477.0V902.0M1461.2 477.0V902.0M937.9 831.2H1498.1M937.9 760.3H1498.1M937.9 618.7H1498.1M937.9 547.8H1498.1" stroke="#c8c8c8" stroke-width="1.3" stroke-dasharray="3 3" fill="none"/>
 <path d="M1218.0 477.0V902.0M937.9 689.5H1498.1" stroke="#c0c0c0" stroke-width="1.3" fill="none"/>
 <path d="M942.4 477.0v4M942.4 902.0v-4M950.5 477.0v4M950.5 902.0v-4M958.6 477.0v4M958.6 902.0v-4M966.7 477.0v4M966.7 902.0v-4M974.9 477.0v8M974.9 902.0v-8M983.0 477.0v4M983.0 902.0v-4M991.1 477.0v4M991.1 902.0v-4M999.2 477.0v4M999.2 902.0v-4M1007.3 477.0v4M1007.3 902.0v-4M1015.4 477.0v4M1015.4 902.0v-4M1023.5 477.0v4M1023.5 902.0v-4M1031.6 477.0v4M1031.6 902.0v-4M1039.7 477.0v4M1039.7 902.0v-4M1047.8 477.0v4M1047.8 902.0v-4M1055.9 477.0v8M1055.9 902.0v-8M1064.0 477.0v4M1064.0 902.0v-4M1072.1 477.0v4M1072.1 902.0v-4M1080.2 477.0v4M1080.2 902.0v-4M1088.3 477.0v4M1088.3 902.0v-4M1096.4 477.0v4M1096.4 902.0v-4M1104.5 477.0v4M1104.5 902.0v-4M1112.6 477.0v4M1112.6 902.0v-4M1120.7 477.0v4M1120.7 902.0v-4M1128.8 477.0v4M1128.8 902.0v-4M1137.0 477.0v8M1137.0 902.0v-8M1145.1 477.0v4M1145.1 902.0v-4M1153.2 477.0v4M1153.2 902.0v-4M1161.3 477.0v4M1161.3 902.0v-4M1169.4 477.0v4M1169.4 902.0v-4M1177.5 477.0v4M1177.5 902.0v-4M1185.6 477.0v4M1185.6 902.0v-4M1193.7 477.0v4M1193.7 902.0v-4M1201.8 477.0v4M1201.8 902.0v-4M1209.9 477.0v4M1209.9 902.0v-4M1218.0 477.0v8M1218.0 902.0v-8M1226.1 477.0v4M1226.1 902.0v-4M1234.2 477.0v4M1234.2 902.0v-4M1242.3 477.0v4M1242.3 902.0v-4M1250.4 477.0v4M1250.4 902.0v-4M1258.5 477.0v4M1258.5 902.0v-4M1266.6 477.0v4M1266.6 902.0v-4M1274.7 477.0v4M1274.7 902.0v-4M1282.8 477.0v4M1282.8 902.0v-4M1290.9 477.0v4M1290.9 902.0v-4M1299.0 477.0v8M1299.0 902.0v-8M1307.2 477.0v4M1307.2 902.0v-4M1315.3 477.0v4M1315.3 902.0v-4M1323.4 477.0v4M1323.4 902.0v-4M1331.5 477.0v4M1331.5 902.0v-4M1339.6 477.0v4M1339.6 902.0v-4M1347.7 477.0v4M1347.7 902.0v-4M1355.8 477.0v4M1355.8 902.0v-4M1363.9 477.0v4M1363.9 902.0v-4M1372.0 477.0v4M1372.0 902.0v-4M1380.1 477.0v8M1380.1 902.0v-8M1388.2 477.0v4M1388.2 902.0v-4M1396.3 477.0v4M1396.3 902.0v-4M1404.4 477.0v4M1404.4 902.0v-4M1412.5 477.0v4M1412.5 902.0v-4M1420.6 477.0v4M1420.6 902.0v-4M1428.7 477.0v4M1428.7 902.0v-4M1436.8 477.0v4M1436.8 902.0v-4M1444.9 477.0v4M1444.9 902.0v-4M1453.0 477.0v4M1453.0 902.0v-4M1461.2 477.0v8M1461.2 902.0v-8M1469.3 477.0v4M1469.3 902.0v-4M1477.4 477.0v4M1477.4 902.0v-4M1485.5 477.0v4M1485.5 902.0v-4M1493.6 477.0v4M1493.6 902.0v-4M937.9 902.0h8M1498.1 902.0h-8M937.9 894.9h4M1498.1 894.9h-4M937.9 887.8h4M1498.1 887.8h-4M937.9 880.7h4M1498.1 880.7h-4M937.9 873.7h4M1498.1 873.7h-4M937.9 866.6h4M1498.1 866.6h-4M937.9 859.5h4M1498.1 859.5h-4M937.9 852.4h4M1498.1 852.4h-4M937.9 845.3h4M1498.1 845.3h-4M937.9 838.2h4M1498.1 838.2h-4M937.9 831.2h8M1498.1 831.2h-8M937.9 824.1h4M1498.1 824.1h-4M937.9 817.0h4M1498.1 817.0h-4M937.9 809.9h4M1498.1 809.9h-4M937.9 802.8h4M1498.1 802.8h-4M937.9 795.7h4M1498.1 795.7h-4M937.9 788.7h4M1498.1 788.7h-4M937.9 781.6h4M1498.1 781.6h-4M937.9 774.5h4M1498.1 774.5h-4M937.9 767.4h4M1498.1 767.4h-4M937.9 760.3h8M1498.1 760.3h-8M937.9 753.2h4M1498.1 753.2h-4M937.9 746.2h4M1498.1 746.2h-4M937.9 739.1h4M1498.1 739.1h-4M937.9 732.0h4M1498.1 732.0h-4M937.9 724.9h4M1498.1 724.9h-4M937.9 717.8h4M1498.1 717.8h-4M937.9 710.7h4M1498.1 710.7h-4M937.9 703.7h4M1498.1 703.7h-4M937.9 696.6h4M1498.1 696.6h-4M937.9 689.5h8M1498.1 689.5h-8M937.9 682.4h4M1498.1 682.4h-4M937.9 675.3h4M1498.1 675.3h-4M937.9 668.3h4M1498.1 668.3h-4M937.9 661.2h4M1498.1 661.2h-4M937.9 654.1h4M1498.1 654.1h-4M937.9 647.0h4M1498.1 647.0h-4M937.9 639.9h4M1498.1 639.9h-4M937.9 632.8h4M1498.1 632.8h-4M937.9 625.8h4M1498.1 625.8h-4M937.9 618.7h8M1498.1 618.7h-8M937.9 611.6h4M1498.1 611.6h-4M937.9 604.5h4M1498.1 604.5h-4M937.9 597.4h4M1498.1 597.4h-4M937.9 590.3h4M1498.1 590.3h-4M937.9 583.3h4M1498.1 583.3h-4M937.9 576.2h4M1498.1 576.2h-4M937.9 569.1h4M1498.1 569.1h-4M937.9 562.0h4M1498.1 562.0h-4M937.9 554.9h4M1498.1 554.9h-4M937.9 547.8h8M1498.1 547.8h-8M937.9 540.8h4M1498.1 540.8h-4M937.9 533.7h4M1498.1 533.7h-4M937.9 526.6h4M1498.1 526.6h-4M937.9 519.5h4M1498.1 519.5h-4M937.9 512.4h4M1498.1 512.4h-4M937.9 505.3h4M1498.1 505.3h-4M937.9 498.3h4M1498.1 498.3h-4M937.9 491.2h4M1498.1 491.2h-4M937.9 484.1h4M1498.1 484.1h-4M937.9 477.0h8M1498.1 477.0h-8" stroke="#000" stroke-width="1.6" fill="none"/>
 <rect x="937.9" y="477.0" width="560.2" height="425.0" fill="none" stroke="#000" stroke-width="2.2"/>
 <path d="M937.9 562.0 L963.4 562.0 M963.4 703.7 L1218.0 675.3 M1218.0 562.0 L1472.6 562.0 M1472.6 703.7 L1498.1 700.8" stroke="#0a0a8c" stroke-width="2.2" fill="none"/>
 <path d="M937.9 549.2 L938.7 549.2 L939.5 549.4 L940.3 549.8 L941.1 550.3 L941.9 551.0 L942.7 551.8 L943.5 552.9 L944.3 554.1 L945.1 555.5 L945.9 557.1 L946.7 558.9 L947.5 561.0 L948.3 563.2 L949.1 565.6 L949.9 568.1 L950.7 570.9 L951.5 573.9 L952.3 577.0 L953.1 580.3 L953.9 583.7 L954.7 587.3 L955.5 591.1 L956.3 594.9 L957.1 598.9 L957.9 603.0 L958.7 607.2 L959.5 611.5 L960.3 615.8 L961.1 620.2 L961.9 624.6 L962.7 629.1 L963.5 633.5 L964.3 638.0 L965.1 642.4 L966.0 646.8 L966.8 651.1 L967.6 655.4 L968.4 659.6 L969.2 663.7 L970.0 667.7 L970.8 671.6 L971.6 675.4 L972.4 679.0 L973.2 682.5 L974.0 685.8 L974.8 689.0 L975.6 691.9 L976.4 694.7 L977.2 697.3 L978.0 699.8 L978.8 702.0 L979.6 704.0 L980.4 705.8 L981.2 707.5 L982.0 708.9 L982.8 710.2 L983.6 711.2 L984.4 712.1 L985.2 712.7 L986.0 713.2 L986.8 713.6 L987.6 713.8 L988.4 713.8 L989.2 713.6 L990.0 713.4 L990.8 713.0 L991.6 712.4 L992.4 711.8 L993.2 711.1 L994.0 710.3 L994.8 709.4 L995.6 708.5 L996.4 707.5 L997.2 706.4 L998.0 705.4 L998.8 704.3 L999.6 703.2 L1000.4 702.1 L1001.2 701.0 L1002.0 700.0 L1002.8 698.9 L1003.6 697.9 L1004.4 697.0 L1005.2 696.1 L1006.0 695.2 L1006.8 694.5 L1007.6 693.8 L1008.4 693.1 L1009.2 692.6 L1010.0 692.1 L1010.8 691.6 L1011.6 691.3 L1012.4 691.1 L1013.2 690.9 L1014.0 690.8 L1014.8 690.8 L1015.6 690.8 L1016.4 690.9 L1017.2 691.1 L1018.0 691.3 L1018.8 691.6 L1019.6 692.0 L1020.4 692.3 L1021.2 692.8 L1022.1 693.2 L1022.9 693.7 L1023.7 694.2 L1024.5 694.8 L1025.3 695.3 L1026.1 695.8 L1026.9 696.4 L1027.7 696.9 L1028.5 697.4 L1029.3 697.9 L1030.1 698.3 L1030.9 698.7 L1031.7 699.1 L1032.5 699.5 L1033.3 699.8 L1034.1 700.0 L1034.9 700.3 L1035.7 700.4 L1036.5 700.5 L1037.3 700.6 L1038.1 700.6 L1038.9 700.5 L1039.7 700.4 L1040.5 700.3 L1041.3 700.1 L1042.1 699.8 L1042.9 699.5 L1043.7 699.1 L1044.5 698.8 L1045.3 698.3 L1046.1 697.9 L1046.9 697.4 L1047.7 696.9 L1048.5 696.3 L1049.3 695.8 L1050.1 695.2 L1050.9 694.7 L1051.7 694.1 L1052.5 693.5 L1053.3 693.0 L1054.1 692.4 L1054.9 691.9 L1055.7 691.4 L1056.5 690.9 L1057.3 690.5 L1058.1 690.0 L1058.9 689.6 L1059.7 689.3 L1060.5 689.0 L1061.3 688.7 L1062.1 688.5 L1062.9 688.3 L1063.7 688.1 L1064.5 688.0 L1065.3 688.0 L1066.1 688.0 L1066.9 688.0 L1067.7 688.0 L1068.5 688.2 L1069.3 688.3 L1070.1 688.5 L1070.9 688.7 L1071.7 688.9 L1072.5 689.2 L1073.3 689.5 L1074.1 689.8 L1074.9 690.1 L1075.7 690.4 L1076.5 690.7 L1077.3 691.0 L1078.2 691.4 L1079.0 691.7 L1079.8 692.0 L1080.6 692.3 L1081.4 692.6 L1082.2 692.8 L1083.0 693.0 L1083.8 693.2 L1084.6 693.4 L1085.4 693.6 L1086.2 693.7 L1087.0 693.7 L1087.8 693.8 L1088.6 693.7 L1089.4 693.7 L1090.2 693.6 L1091.0 693.5 L1091.8 693.3 L1092.6 693.1 L1093.4 692.8 L1094.2 692.6 L1095.0 692.2 L1095.8 691.9 L1096.6 691.5 L1097.4 691.1 L1098.2 690.7 L1099.0 690.2 L1099.8 689.8 L1100.6 689.3 L1101.4 688.8 L1102.2 688.3 L1103.0 687.8 L1103.8 687.4 L1104.6 686.9 L1105.4 686.4 L1106.2 685.9 L1107.0 685.5 L1107.8 685.1 L1108.6 684.7 L1109.4 684.3 L1110.2 684.0 L1111.0 683.7 L1111.8 683.4 L1112.6 683.2 L1113.4 683.0 L1114.2 682.8 L1115.0 682.7 L1115.8 682.6 L1116.6 682.6 L1117.4 682.6 L1118.2 682.6 L1119.0 682.7 L1119.8 682.8 L1120.6 683.0 L1121.4 683.2 L1122.2 683.4 L1123.0 683.6 L1123.8 683.9 L1124.6 684.2 L1125.4 684.5 L1126.2 684.8 L1127.0 685.1 L1127.8 685.5 L1128.6 685.8 L1129.4 686.1 L1130.2 686.5 L1131.0 686.8 L1131.8 687.1 L1132.6 687.4 L1133.4 687.6 L1134.3 687.9 L1135.1 688.1 L1135.9 688.3 L1136.7 688.4 L1137.5 688.5 L1138.3 688.6 L1139.1 688.6 L1139.9 688.6 L1140.7 688.6 L1141.5 688.5 L1142.3 688.3 L1143.1 688.1 L1143.9 687.9 L1144.7 687.6 L1145.5 687.2 L1146.3 686.9 L1147.1 686.5 L1147.9 686.0 L1148.7 685.5 L1149.5 685.0 L1150.3 684.5 L1151.1 683.9 L1151.9 683.3 L1152.7 682.7 L1153.5 682.1 L1154.3 681.5 L1155.1 680.9 L1155.9 680.3 L1156.7 679.7 L1157.5 679.1 L1158.3 678.6 L1159.1 678.0 L1159.9 677.5 L1160.7 677.1 L1161.5 676.6 L1162.3 676.2 L1163.1 675.9 L1163.9 675.6 L1164.7 675.3 L1165.5 675.2 L1166.3 675.0 L1167.1 675.0 L1167.9 675.0 L1168.7 675.0 L1169.5 675.1 L1170.3 675.3 L1171.1 675.6 L1171.9 675.9 L1172.7 676.2 L1173.5 676.6 L1174.3 677.1 L1175.1 677.6 L1175.9 678.2 L1176.7 678.8 L1177.5 679.4 L1178.3 680.1 L1179.1 680.8 L1179.9 681.5 L1180.7 682.2 L1181.5 682.9 L1182.3 683.6 L1183.1 684.3 L1183.9 685.0 L1184.7 685.6 L1185.5 686.2 L1186.3 686.8 L1187.1 687.2 L1187.9 687.7 L1188.7 688.0 L1189.5 688.3 L1190.4 688.5 L1191.2 688.6 L1192.0 688.6 L1192.8 688.5 L1193.6 688.3 L1194.4 687.9 L1195.2 687.4 L1196.0 686.8 L1196.8 686.1 L1197.6 685.2 L1198.4 684.1 L1199.2 682.9 L1200.0 681.6 L1200.8 680.1 L1201.6 678.5 L1202.4 676.7 L1203.2 674.8 L1204.0 672.7 L1204.8 670.5 L1205.6 668.2 L1206.4 665.7 L1207.2 663.1 L1208.0 660.3 L1208.8 657.5 L1209.6 654.5 L1210.4 651.4 L1211.2 648.3 L1212.0 645.0 L1212.8 641.7 L1213.6 638.3 L1214.4 634.9 L1215.2 631.4 L1216.0 627.9 L1216.8 624.3 L1217.6 620.7 L1218.4 617.2 L1219.2 613.6 L1220.0 610.1 L1220.8 606.6 L1221.6 603.1 L1222.4 599.7 L1223.2 596.3 L1224.0 593.1 L1224.8 589.8 L1225.6 586.7 L1226.4 583.7 L1227.2 580.8 L1228.0 578.0 L1228.8 575.4 L1229.6 572.8 L1230.4 570.4 L1231.2 568.1 L1232.0 566.0 L1232.8 564.0 L1233.6 562.2 L1234.4 560.5 L1235.2 558.9 L1236.0 557.6 L1236.8 556.3 L1237.6 555.2 L1238.4 554.3 L1239.2 553.5 L1240.0 552.9 L1240.8 552.3 L1241.6 552.0 L1242.4 551.7 L1243.2 551.6 L1244.0 551.6 L1244.8 551.7 L1245.6 551.9 L1246.5 552.2 L1247.3 552.6 L1248.1 553.0 L1248.9 553.6 L1249.7 554.2 L1250.5 554.8 L1251.3 555.5 L1252.1 556.2 L1252.9 557.0 L1253.7 557.8 L1254.5 558.6 L1255.3 559.4 L1256.1 560.2 L1256.9 561.0 L1257.7 561.8 L1258.5 562.5 L1259.3 563.3 L1260.1 563.9 L1260.9 564.6 L1261.7 565.2 L1262.5 565.7 L1263.3 566.2 L1264.1 566.7 L1264.9 567.1 L1265.7 567.4 L1266.5 567.7 L1267.3 567.9 L1268.1 568.0 L1268.9 568.1 L1269.7 568.1 L1270.5 568.0 L1271.3 567.9 L1272.1 567.8 L1272.9 567.5 L1273.7 567.3 L1274.5 567.0 L1275.3 566.6 L1276.1 566.2 L1276.9 565.8 L1277.7 565.3 L1278.5 564.9 L1279.3 564.4 L1280.1 563.9 L1280.9 563.3 L1281.7 562.8 L1282.5 562.3 L1283.3 561.8 L1284.1 561.3 L1284.9 560.8 L1285.7 560.3 L1286.5 559.9 L1287.3 559.5 L1288.1 559.1 L1288.9 558.7 L1289.7 558.4 L1290.5 558.1 L1291.3 557.9 L1292.1 557.7 L1292.9 557.5 L1293.7 557.4 L1294.5 557.4 L1295.3 557.4 L1296.1 557.4 L1296.9 557.5 L1297.7 557.6 L1298.5 557.8 L1299.3 558.0 L1300.1 558.2 L1300.9 558.5 L1301.7 558.8 L1302.6 559.1 L1303.4 559.5 L1304.2 559.9 L1305.0 560.3 L1305.8 560.7 L1306.6 561.1 L1307.4 561.6 L1308.2 562.0 L1309.0 562.4 L1309.8 562.8 L1310.6 563.2 L1311.4 563.6 L1312.2 564.0 L1313.0 564.3 L1313.8 564.7 L1314.6 565.0 L1315.4 565.2 L1316.2 565.5 L1317.0 565.7 L1317.8 565.8 L1318.6 566.0 L1319.4 566.1 L1320.2 566.1 L1321.0 566.1 L1321.8 566.1 L1322.6 566.0 L1323.4 565.9 L1324.2 565.7 L1325.0 565.5 L1325.8 565.3 L1326.6 565.1 L1327.4 564.8 L1328.2 564.5 L1329.0 564.1 L1329.8 563.8 L1330.6 563.4 L1331.4 563.0 L1332.2 562.6 L1333.0 562.2 L1333.8 561.8 L1334.6 561.4 L1335.4 561.0 L1336.2 560.7 L1337.0 560.3 L1337.8 559.9 L1338.6 559.6 L1339.4 559.3 L1340.2 559.0 L1341.0 558.8 L1341.8 558.5 L1342.6 558.3 L1343.4 558.2 L1344.2 558.1 L1345.0 558.0 L1345.8 558.0 L1346.6 558.0 L1347.4 558.0 L1348.2 558.1 L1349.0 558.2 L1349.8 558.4 L1350.6 558.6 L1351.4 558.8 L1352.2 559.1 L1353.0 559.4 L1353.8 559.7 L1354.6 560.0 L1355.4 560.4 L1356.2 560.8 L1357.0 561.2 L1357.8 561.6 L1358.7 562.0 L1359.5 562.4 L1360.3 562.8 L1361.1 563.2 L1361.9 563.6 L1362.7 564.0 L1363.5 564.4 L1364.3 564.7 L1365.1 565.1 L1365.9 565.4 L1366.7 565.6 L1367.5 565.8 L1368.3 566.0 L1369.1 566.2 L1369.9 566.3 L1370.7 566.4 L1371.5 566.4 L1372.3 566.4 L1373.1 566.3 L1373.9 566.2 L1374.7 566.1 L1375.5 565.9 L1376.3 565.6 L1377.1 565.4 L1377.9 565.1 L1378.7 564.7 L1379.5 564.3 L1380.3 563.9 L1381.1 563.5 L1381.9 563.1 L1382.7 562.6 L1383.5 562.2 L1384.3 561.7 L1385.1 561.2 L1385.9 560.7 L1386.7 560.3 L1387.5 559.8 L1388.3 559.4 L1389.1 558.9 L1389.9 558.5 L1390.7 558.2 L1391.5 557.9 L1392.3 557.6 L1393.1 557.3 L1393.9 557.1 L1394.7 556.9 L1395.5 556.8 L1396.3 556.8 L1397.1 556.8 L1397.9 556.8 L1398.7 556.9 L1399.5 557.0 L1400.3 557.3 L1401.1 557.5 L1401.9 557.8 L1402.7 558.2 L1403.5 558.6 L1404.3 559.0 L1405.1 559.5 L1405.9 560.0 L1406.7 560.6 L1407.5 561.1 L1408.3 561.7 L1409.1 562.3 L1409.9 563.0 L1410.7 563.6 L1411.5 564.2 L1412.3 564.8 L1413.1 565.4 L1413.9 566.0 L1414.8 566.5 L1415.6 567.0 L1416.4 567.5 L1417.2 567.9 L1418.0 568.3 L1418.8 568.6 L1419.6 568.9 L1420.4 569.1 L1421.2 569.2 L1422.0 569.2 L1422.8 569.2 L1423.6 569.1 L1424.4 568.9 L1425.2 568.7 L1426.0 568.4 L1426.8 567.9 L1427.6 567.5 L1428.4 566.9 L1429.2 566.3 L1430.0 565.6 L1430.8 564.8 L1431.6 564.0 L1432.4 563.1 L1433.2 562.2 L1434.0 561.3 L1434.8 560.3 L1435.6 559.3 L1436.4 558.3 L1437.2 557.3 L1438.0 556.4 L1438.8 555.4 L1439.6 554.5 L1440.4 553.6 L1441.2 552.7 L1442.0 551.9 L1442.8 551.2 L1443.6 550.6 L1444.4 550.1 L1445.2 549.7 L1446.0 549.4 L1446.8 549.2 L1447.6 549.2 L1448.4 549.3 L1449.2 549.6 L1450.0 550.0 L1450.8 550.6 L1451.6 551.4 L1452.4 552.4 L1453.2 553.5 L1454.0 554.9 L1454.8 556.4 L1455.6 558.1 L1456.4 560.1 L1457.2 562.2 L1458.0 564.5 L1458.8 567.0 L1459.6 569.7 L1460.4 572.6 L1461.2 575.6 L1462.0 578.8 L1462.8 582.2 L1463.6 585.8 L1464.4 589.4 L1465.2 593.2 L1466.0 597.2 L1466.8 601.2 L1467.6 605.4 L1468.4 609.6 L1469.2 613.9 L1470.0 618.3 L1470.9 622.7 L1471.7 627.1 L1472.5 631.6 L1473.3 636.1 L1474.1 640.5 L1474.9 644.9 L1475.7 649.3 L1476.5 653.6 L1477.3 657.8 L1478.1 662.0 L1478.9 666.0 L1479.7 670.0 L1480.5 673.8 L1481.3 677.5 L1482.1 681.0 L1482.9 684.4 L1483.7 687.6 L1484.5 690.7 L1485.3 693.6 L1486.1 696.2 L1486.9 698.7 L1487.7 701.0 L1488.5 703.2 L1489.3 705.1 L1490.1 706.8 L1490.9 708.3 L1491.7 709.6 L1492.5 710.8 L1493.3 711.7 L1494.1 712.5 L1494.9 713.1 L1495.7 713.5 L1496.5 713.7 L1497.3 713.8 L1498.1 713.7" stroke="#006400" stroke-width="2.1" fill="none" stroke-linejoin="round"/>
 <g font-family="Liberation Sans" font-size="12.5" fill="#111"><text x="972.9" y="472" text-anchor="middle">-3</text><text x="972.9" y="918" text-anchor="middle">-3</text><text x="1053.9" y="472" text-anchor="middle">-2</text><text x="1053.9" y="918" text-anchor="middle">-2</text><text x="1135.0" y="472" text-anchor="middle">-1</text><text x="1135.0" y="918" text-anchor="middle">-1</text><text x="1218.0" y="472" text-anchor="middle">0</text><text x="1218.0" y="918" text-anchor="middle">0</text><text x="1299.0" y="472" text-anchor="middle">1</text><text x="1299.0" y="918" text-anchor="middle">1</text><text x="1380.1" y="472" text-anchor="middle">2</text><text x="1380.1" y="918" text-anchor="middle">2</text><text x="1461.2" y="472" text-anchor="middle">3</text><text x="1461.2" y="918" text-anchor="middle">3</text><text x="928" y="906.5" text-anchor="end">-3</text><text x="1508" y="906.5">-3</text><text x="928" y="835.7" text-anchor="end">-2</text><text x="1508" y="835.7">-2</text><text x="928" y="764.8" text-anchor="end">-1</text><text x="1508" y="764.8">-1</text><text x="928" y="694.0" text-anchor="end">0</text><text x="1508" y="694.0">0</text><text x="928" y="623.2" text-anchor="end">1</text><text x="1508" y="623.2">1</text><text x="928" y="552.3" text-anchor="end">2</text><text x="1508" y="552.3">2</text><text x="928" y="481.5" text-anchor="end">3</text><text x="1508" y="481.5">3</text></g>
</svg>
 <div class="a" style="left:522px;top:577px;width:82px;height:36px;border:1px solid #c9ccd0;border-radius:4px;background:#fcfcfc;font-size:15px;color:#333;text-align:center;line-height:34px"><i class="c">停</i><i class="c">止</i>(S)</div>
 <div class="a" style="left:613px;top:577px;width:83px;height:36px;border:1px solid #c9ccd0;border-radius:4px;background:#fcfcfc;font-size:15px;color:#333;text-align:center;line-height:34px"><i class="c">关</i><i class="c">闭</i>(C)</div>
</div>

</body></html>
